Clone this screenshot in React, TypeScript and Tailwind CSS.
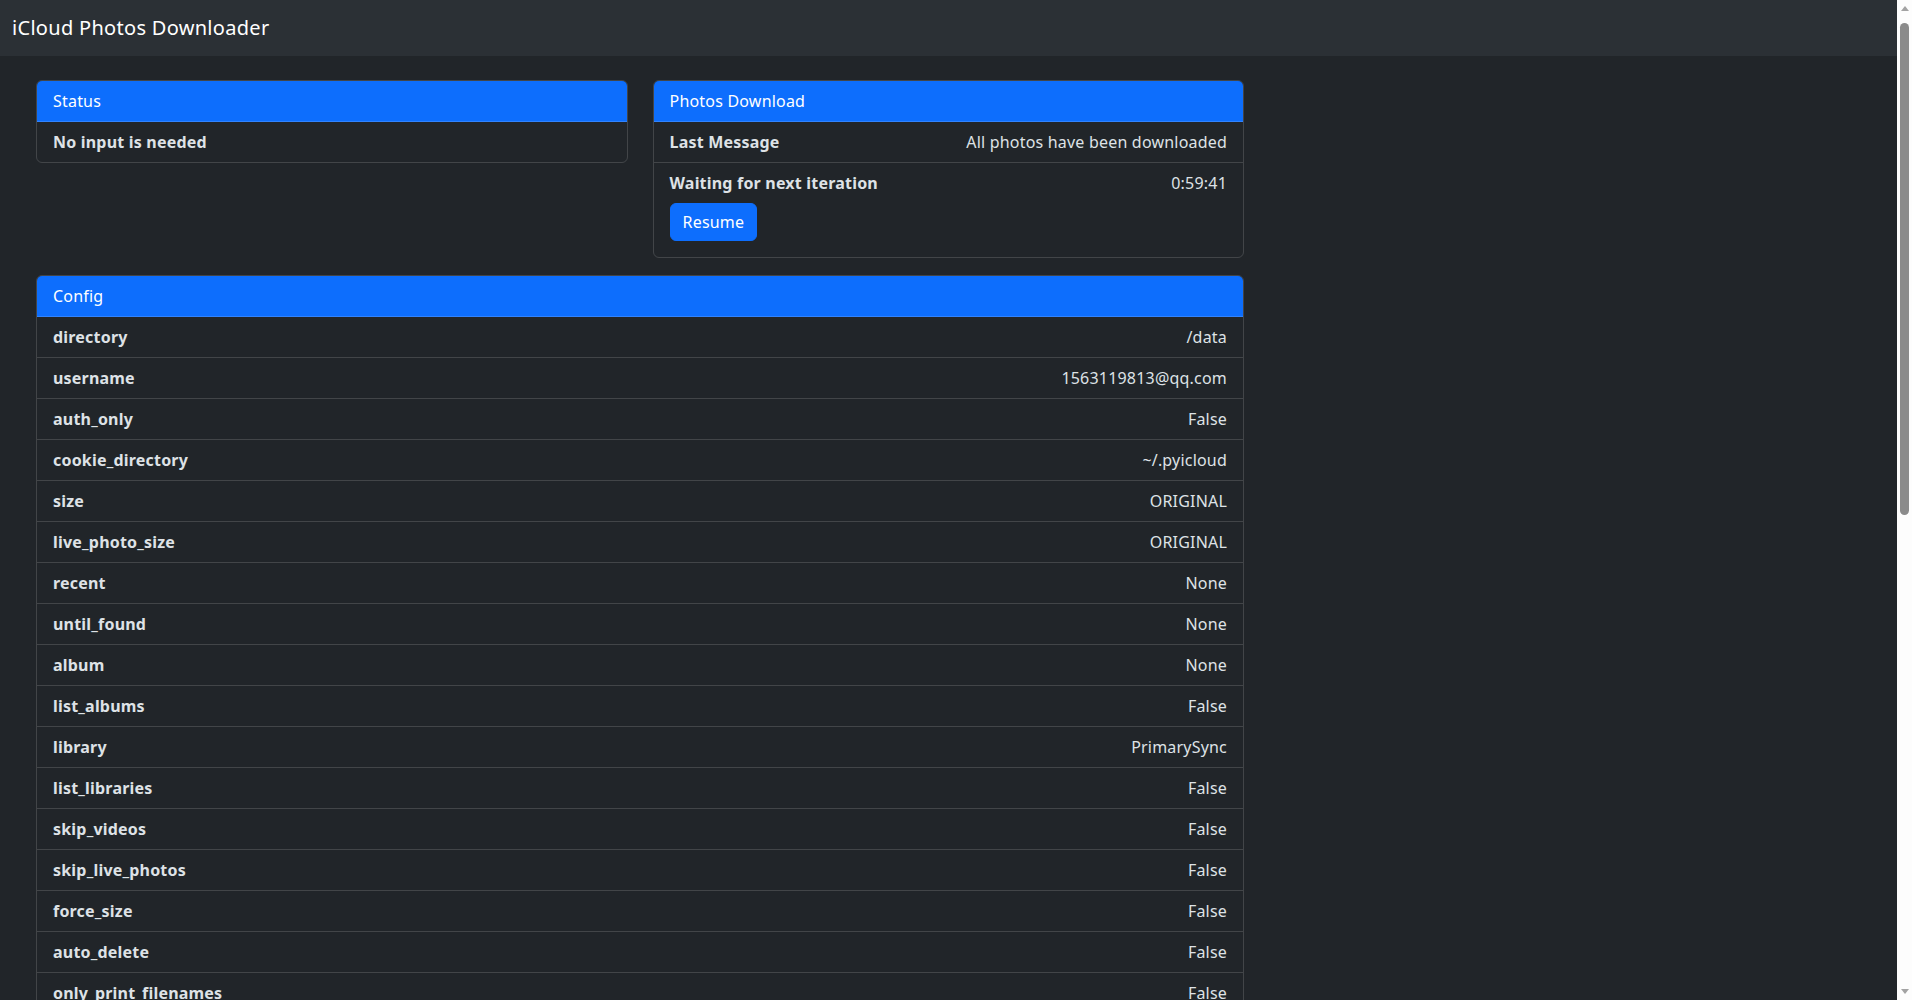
const CONFIG: [string, string][] = [
  ['directory', '/data'],
  ['username', '1563119813@qq.com'],
  ['auth_only', 'False'],
  ['cookie_directory', '~/.pyicloud'],
  ['size', 'ORIGINAL'],
  ['live_photo_size', 'ORIGINAL'],
  ['recent', 'None'],
  ['until_found', 'None'],
  ['album', 'None'],
  ['list_albums', 'False'],
  ['library', 'PrimarySync'],
  ['list_libraries', 'False'],
  ['skip_videos', 'False'],
  ['skip_live_photos', 'False'],
  ['force_size', 'False'],
  ['auto_delete', 'False'],
  ['only_print_filenames', 'False'],
  ['folder_structure', '{:%Y/%m/%d}'],
  ['set_exif_datetime', 'False'],
  ['smtp_username', 'None'],
  ['smtp_host', 'smtp.gmail.com'],
  ['smtp_port', '587'],
  ['smtp_no_tls', 'False'],
  ['notification_email', 'None'],
  ['notification_email_from', 'None'],
  ['log_level', 'debug'],
  ['no_progress_bar', 'False'],
  ['notification_script', 'None'],
  ['threads_num', '1'],
  ['delete_after_download', 'False'],
  ['domain', 'com'],
  ['watch_with_interval', '3600'],
  ['dry_run', 'False'],
  ['password_providers', 'webui'],
  ['mfa_provider', 'webui'],
  ['use_os_locale', 'False'],
  ['keep_unicode_in_filenames', 'False'],
  ['live_photo_mov_filename_policy', 'suffix'],
  ['align_raw', 'as-is'],
  ['file_match_policy', 'name-size-dedup-with-suffix'],
];

function Card({ title, children, className = '' }: { title: string; children: React.ReactNode; className?: string }) {
  return (
    <div className={`overflow-hidden rounded-md border border-white/15 ${className}`}>
      <div className="border-b border-white/15 bg-[#0d6efd] px-4 py-2 leading-6 text-white">{title}</div>
      {children}
    </div>
  );
}

function Row({ label, value, last = false }: { label: string; value?: string; last?: boolean }) {
  return (
    <div className={`flex justify-between px-4 py-2 leading-6 ${last ? '' : 'border-b border-white/15'}`}>
      <span className="font-bold">{label}</span>
      {value && <span>{value}</span>}
    </div>
  );
}

// window scrollbar as seen in the screenshot
function Scrollbar() {
  return (
    <aside className="flex w-[15px] shrink-0 flex-col bg-[#fdfdfd]">
      <div className="flex h-[17px] items-center justify-center">
        <div className="h-0 w-0 border-x-[4px] border-b-[5px] border-x-transparent border-b-[#a3a3a3]" />
      </div>
      <div className="flex-1 pt-[6px]">
        <div className="mx-auto h-[492px] w-[9px] rounded-full bg-[#8b8b8b]" />
      </div>
      <div className="flex h-[17px] items-center justify-center">
        <div className="h-0 w-0 border-x-[4px] border-t-[5px] border-x-transparent border-t-[#a3a3a3]" />
      </div>
    </aside>
  );
}

export default function App() {
  return (
    <div className="flex h-screen overflow-hidden bg-[#212529] font-['Noto_Sans',sans-serif] text-base tracking-[0.2px] text-[#dee2e6]">
      <div className="min-w-0 flex-1">
        {/* Navbar */}
        <nav className="flex h-14 items-center bg-[#2b3035] px-3">
          <span className="py-[5px] text-[20px] leading-[30px] tracking-[0.3px] text-white">iCloud Photos Downloader</span>
        </nav>

        <main className="pb-6 pl-9 pt-6">
          <div className="w-[1208px]">
            <div className="grid grid-cols-2 items-start gap-[25px]">
              <Card title="Status">
                <Row label="No input is needed" last />
              </Card>

              <Card title="Photos Download">
                <Row label="Last Message" value="All photos have been downloaded" />
                <div className="px-4 py-2 leading-6">
                  <div className="flex justify-between">
                    <span className="font-bold">Waiting for next iteration</span>
                    <span>0:59:41</span>
                  </div>
                  <button className="my-2 rounded-md border border-[#0d6efd] bg-[#0d6efd] px-3 py-1.5 leading-6 text-white">
                    Resume
                  </button>
                </div>
              </Card>
            </div>

            <Card title="Config" className="mt-[17px]">
              {CONFIG.map(([k, v], i) => (
                <Row key={k} label={k} value={v} last={i === CONFIG.length - 1} />
              ))}
            </Card>
          </div>
        </main>
      </div>
      <Scrollbar />
    </div>
  );
}
